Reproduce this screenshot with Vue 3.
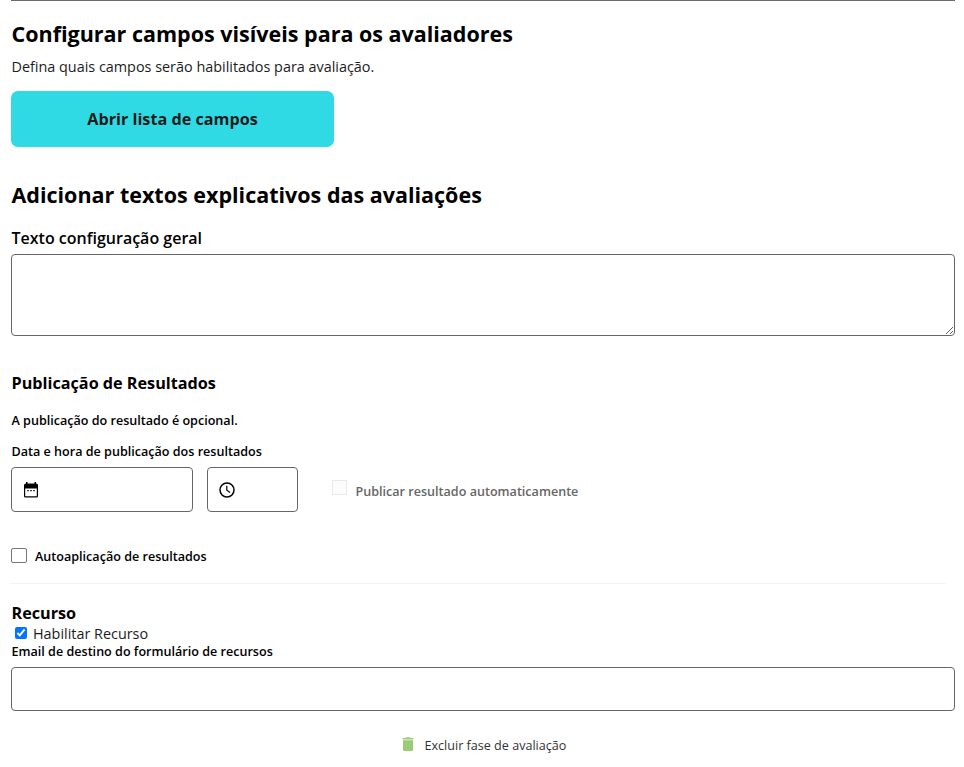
<script setup>
import { ref } from 'vue'

const generalText = ref('')
const email = ref('')
const autoApply = ref(false)
const autoPublish = ref(false)
const appealEnabled = ref(true)
</script>

<template>
  <main class="phase">
    <section class="fields">
      <h2 class="title">Configurar campos visíveis para os avaliadores</h2>
      <p class="lead">Defina quais campos serão habilitados para avaliação.</p>
      <button class="open" type="button">Abrir lista de campos</button>
    </section>

    <section class="texts">
      <h2 class="title">Adicionar textos explicativos das avaliações</h2>
      <label class="label-lg" for="general">Texto configuração geral</label>
      <textarea id="general" v-model="generalText" class="area"></textarea>
    </section>

    <section class="publish">
      <h4 class="subtitle">Publicação de Resultados</h4>
      <p class="note">A publicação do resultado é opcional.</p>
      <div class="label-sm">Data e hora de publicação dos resultados</div>
      <div class="row">
        <div class="picker date">
          <svg class="icon" viewBox="0 0 16 16">
            <path fill="#000" fill-rule="evenodd" d="M3 0h1.500v1.500h7V0H13v1.500Q15 1.500 15 3V14Q15 15.500 13.700 15.500H2.300Q1 15.500 1 14V3Q1 1.500 3 1.500zM2.200 6.500v7.700h11.600V6.500z" />
            <path fill="#444" d="M4 8h2v1.200H4zM7 8h2v1.200H7zM10 8h2v1.200h-2z" />
          </svg>
        </div>
        <div class="picker time">
          <svg class="icon" viewBox="0 0 16 16">
            <circle cx="8" cy="8" r="7" fill="none" stroke="#000" stroke-width="1.500" />
            <path d="M7.800 3.800v4.500l3.300 2.200" fill="none" stroke="#000" stroke-width="1.200" />
          </svg>
        </div>
        <label class="auto">
          <input v-model="autoPublish" class="box" type="checkbox" disabled>
          <span>Publicar resultado automaticamente</span>
        </label>
      </div>
      <label class="apply">
        <input v-model="autoApply" class="box" type="checkbox">
        <span>Autoaplicação de resultados</span>
      </label>
    </section>

    <section class="appeal">
      <h4 class="subtitle">Recurso</h4>
      <label class="enable">
        <input v-model="appealEnabled" class="check" type="checkbox">
        <span>Habilitar Recurso</span>
      </label>
      <label class="label-sm" for="email">Email de destino do formulário de recursos</label>
      <input id="email" v-model="email" class="email" type="text">
    </section>

    <button class="remove" type="button">
      <svg class="trash" viewBox="0 0 12 14">
        <path fill="#9c7" d="M.5 1h3l.7-.8h3.600l.7.800h3v1.500H.500zM1 3.300h10v9.200q0 1.500-1.300 1.500H2.300Q1 14 1 12.500z" />
      </svg>
      <span>Excluir fase de avaliação</span>
    </button>
  </main>
</template>

<style>
body {
  background: #fff;
}
</style>

<style scoped>
.phase {
  box-sizing: border-box;
  height: 767px;
  margin: 0 9px 0 11px;
  border-top: 1px solid #6c6c6c;
  font-family: "Open Sans", sans-serif;
  color: #000;
  white-space: nowrap;
  overflow: hidden;
}
h2, h4, p {
  margin: 0;
}
.title, .lead, .label-lg, .subtitle, .note, .label-sm {
  padding-left: 0.500px;
}
.title {
  font-size: 21.500px;
  font-weight: 700;
  line-height: 30px;
}
.fields {
  padding-top: 18px;
}
.lead {
  margin-top: 8px;
  font-size: 14.400px;
  line-height: 20px;
  color: #1c1c1c;
}
.open {
  display: block;
  width: 323px;
  height: 56px;
  margin-top: 14px;
  padding: 0;
  border: 0;
  border-radius: 7px;
  background: #30dae4;
  color: #1b1b1b;
  font: 700 16.200px/22px "Open Sans", sans-serif;
}
.texts {
  padding-top: 33px;
}
.label-lg {
  display: block;
  margin-top: 17px;
  font-size: 16px;
  font-weight: 600;
  line-height: 22px;
}
.area {
  display: block;
  box-sizing: border-box;
  width: 944px;
  height: 82px;
  margin: 5px 0 0;
  border: 1px solid #666;
  border-radius: 4px;
  resize: vertical;
}
.publish {
  padding-top: 36px;
}
.subtitle {
  font-size: 16.200px;
  font-weight: 700;
  line-height: 22px;
}
.note {
  margin-top: 18px;
  font-size: 12.580px;
  font-weight: 600;
  line-height: 18px;
}
.label-sm {
  display: block;
  font-size: 12.580px;
  font-weight: 600;
  line-height: 18px;
}
.note + .label-sm {
  margin-top: 13px;
}
.row {
  display: flex;
  height: 45px;
  margin-top: 6px;
}
.picker {
  display: flex;
  align-items: center;
  box-sizing: border-box;
  padding-left: 11px;
  border: 1px solid #666;
  border-radius: 4px;
}
.date {
  width: 182px;
}
.time {
  width: 91px;
  margin-left: 14px;
}
.icon {
  width: 16px;
  height: 16px;
}
.auto, .apply {
  display: flex;
  font-size: 12.580px;
  font-weight: 600;
  line-height: 18px;
}
.auto {
  gap: 8.500px;
  margin: 13px 0 0 34px;
  color: #666;
}
.auto span {
  margin-top: 3px;
}
.box {
  appearance: none;
  box-sizing: border-box;
  width: 15px;
  height: 15px;
  margin: 0;
  border: 1px solid #767676;
  border-radius: 2px;
}
.auto .box {
  border-color: #e9e9e9;
  border-radius: 0;
  background: #fcfcfc;
}
.apply {
  gap: 8px;
  align-items: flex-start;
  margin-top: 36px;
}
.apply .box {
  width: 16px;
}
.appeal {
  margin-top: 17px;
}
.appeal::before {
  content: "";
  display: block;
  width: 935px;
  height: 1px;
  margin-bottom: 18px;
  background: #f3f3f3;
}
.enable {
  display: flex;
  align-items: center;
  gap: 6px;
  height: 19px;
  padding-left: 4px;
  font-size: 14.400px;
  line-height: 19px;
  color: #1c1c1c;
}
.check {
  width: 12px;
  height: 12px;
  margin: 0 0 1px;
  accent-color: #0075ff;
}
.email {
  display: block;
  box-sizing: border-box;
  width: 944px;
  height: 44px;
  margin-top: 6px;
  border: 1px solid #666;
  border-radius: 4px;
}
.remove {
  display: flex;
  align-items: flex-start;
  gap: 10.500px;
  margin: 26px 0 0 391px;
  padding: 0;
  border: 0;
  background: none;
  font: 400 12.580px/18px "Open Sans", sans-serif;
  color: #333;
}
.trash {
  width: 12px;
  height: 14px;
}
</style>
